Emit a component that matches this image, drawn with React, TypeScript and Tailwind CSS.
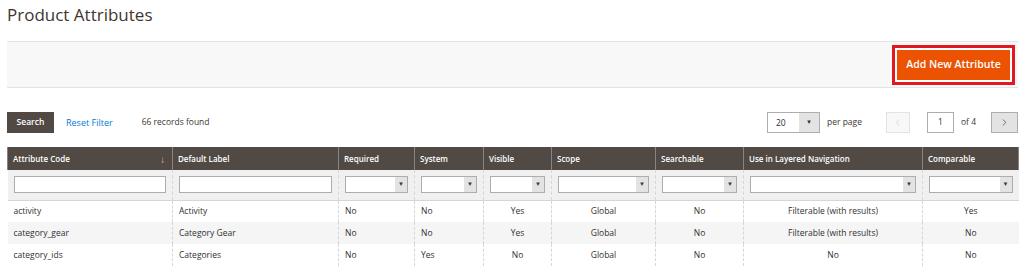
import { ChevronLeft, ChevronRight } from "lucide-react";

const cols = [
  { label: "Attribute Code", w: "w-[165px]", kind: "text", sort: true },
  { label: "Default Label", w: "w-[166px]", kind: "text" },
  { label: "Required", w: "w-[76px]", kind: "select" },
  { label: "System", w: "w-[69px]", kind: "select" },
  { label: "Visible", w: "w-[68px]", kind: "select" },
  { label: "Scope", w: "w-[104px]", kind: "select" },
  { label: "Searchable", w: "w-[88px]", kind: "select" },
  { label: "Use in Layered Navigation", w: "w-[179px]", kind: "select" },
  { label: "Comparable", w: "w-[96px]", kind: "select" },
];

const rows = [
  ["activity", "Activity", "No", "No", "Yes", "Global", "No", "Filterable (with results)", "Yes"],
  ["category_gear", "Category Gear", "No", "No", "Yes", "Global", "No", "Filterable (with results)", "No"],
  ["category_ids", "Categories", "No", "Yes", "No", "Global", "No", "No", "No"],
];

function FakeSelect() {
  return (
    <div className="flex h-[17px] border border-[#adadad] bg-white">
      <div className="flex-1" />
      <div className="flex w-[12px] items-center justify-center bg-[#e3e3e3] text-[6px] text-[#41362f]">▼</div>
    </div>
  );
}

export default function App() {
  return (
    <div className="min-h-[266px] bg-white pl-[7px] pr-[6px] font-['Open_Sans',sans-serif] text-[#303030]">
      <h1 className="pt-[1px] text-[17px] leading-[28px] text-[#41362f]">Product Attributes</h1>

      <div className="mt-[12px] flex h-[47px] items-center justify-end border-y border-[#e3e3e3] bg-[#f8f8f8] pr-[3px]">
        <div className="border-[3px] border-[#e3171f] bg-white p-[2px]">
          <button className="h-[30px] w-[113px] bg-[#eb5202] text-[10.5px] font-semibold text-white">
            Add New Attribute
          </button>
        </div>
      </div>

      <div className="mt-[24px] flex h-[21px] items-center text-[8.5px]">
        <button className="h-[21px] w-[47px] bg-[#514943] text-[8.5px] font-semibold text-white">Search</button>
        <span className="ml-[12px] text-[9px] text-[#007bdb]">Reset Filter</span>
        <span className="ml-[29px] text-[#41362f]">66 records found</span>
        <div className="ml-auto flex items-center">
          <div className="flex h-[21px] w-[53px] border border-[#adadad]">
            <span className="flex-1 pl-[8px] leading-[19px]">20</span>
            <span className="flex w-[20px] items-center justify-center bg-[#e3e3e3] text-[6px]">▼</span>
          </div>
          <span className="ml-[7px] text-[#41362f]">per page</span>
          <div className="ml-[24px] flex h-[21px] w-[24px] items-center justify-center border border-[#e3e3e3] bg-[#f8f8f8] text-[#c8c8c8]">
            <ChevronLeft size={11} strokeWidth={1.5} />
          </div>
          <div className="ml-[17px] flex h-[21px] w-[27px] items-center justify-center border border-[#adadad]">1</div>
          <span className="ml-[7px] text-[#41362f]">of 4</span>
          <div className="ml-[15px] flex h-[21px] w-[27px] items-center justify-center border border-[#adadad] bg-[#e3e3e3] text-[#41362f]">
            <ChevronRight size={11} strokeWidth={1.5} />
          </div>
        </div>
      </div>

      <table className="mt-[14px] w-full table-fixed border-collapse text-[8.5px]">
        <colgroup>
          {cols.map((c) => (
            <col key={c.label} className={c.w} />
          ))}
        </colgroup>
        <thead>
          <tr className="h-[23px] bg-[#514943] text-white">
            {cols.map((c) => (
              <th
                key={c.label}
                className="border-x border-[#8a837f] px-[5px] text-left text-[8px] font-semibold"
              >
                <div className="flex items-center justify-between">
                  <span>{c.label}</span>
                  {c.sort && <span className="pr-[2px] text-[10px] leading-none text-[#f5a58c]">↓</span>}
                </div>
              </th>
            ))}
          </tr>
          <tr className="h-[30px] bg-[#f0f0f0]">
            {cols.map((c) => (
              <td key={c.label} className="border-x border-dashed border-[#d6d6d6] px-[6px] first:border-l-0 last:border-r-0">
                {c.kind === "text" ? (
                  <div className="h-[17px] border border-[#adadad] bg-white" />
                ) : (
                  <FakeSelect />
                )}
              </td>
            ))}
          </tr>
        </thead>
        <tbody className="border-t border-[#d6d6d6]">
          {rows.map((r, i) => (
            <tr key={r[0]} className={i % 2 === 1 ? "h-[22px] bg-[#f5f5f5]" : "h-[22px] bg-white"}>
              {r.map((v, j) => (
                <td
                  key={j}
                  className={
                    "border-x border-dashed border-[#d6d6d6] px-[6px] first:border-l-0 last:border-r-0 " +
                    (j >= 4 ? "text-center" : "text-left")
                  }
                >
                  {v}
                </td>
              ))}
            </tr>
          ))}
        </tbody>
      </table>
    </div>
  );
}
